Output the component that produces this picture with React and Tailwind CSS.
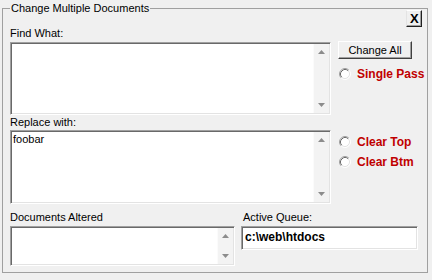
import React from "react";

// classic sunken edit box
function Sunken({ className = "", children }) {
  return (
    <div
      className={`border border-t-[#a0a0a0] border-l-[#a0a0a0] border-r-white border-b-white bg-white p-[1px] shadow-[inset_1px_1px_0_#696969,inset_-1px_-1px_0_#e3e3e3] ${className}`}
    >
      {children}
    </div>
  );
}

function ScrollBar() {
  return (
    <div className="w-[16px] h-full flex flex-col justify-between bg-[#f3f3f3] border-l border-[#fbfbfb]">
      <div className="h-[16px] flex items-center justify-center">
        <svg width="7" height="4" viewBox="0 0 7 4">
          <polygon points="3.5,0 7,4 0,4" fill="#8c8c8c" />
        </svg>
      </div>
      <div className="h-[16px] flex items-center justify-center">
        <svg width="7" height="4" viewBox="0 0 7 4">
          <polygon points="0,0 7,0 3.5,4" fill="#8c8c8c" />
        </svg>
      </div>
    </div>
  );
}

function TextBox({ className = "", text = "" }) {
  return (
    <Sunken className={className}>
      <div className="flex h-full">
        <textarea
          defaultValue={text}
          className="flex-1 h-full resize-none outline-none bg-transparent pl-[1px] pt-[1px] leading-[13px] overflow-hidden"
        />
        <ScrollBar />
      </div>
    </Sunken>
  );
}

function Radio({ label, className = "", cover = false }) {
  return (
    <div className={`flex items-center h-[14px] ${className}`}>
      <svg width="12" height="12" viewBox="0 0 12 12" className="ml-[1px] shrink-0">
        <circle cx="6" cy="6" r="5" fill="#fff" />
        <path d="M2.11 9.89 A5.5 5.5 0 0 1 9.89 2.11" stroke="#a0a0a0" fill="none" />
        <path d="M9.89 2.11 A5.5 5.5 0 0 1 2.11 9.89" stroke="#ffffff" fill="none" />
        <path d="M2.82 9.18 A4.5 4.5 0 0 1 9.18 2.82" stroke="#696969" fill="none" />
        <path d="M9.18 2.82 A4.5 4.5 0 0 1 2.82 9.18" stroke="#e3e3e3" fill="none" />
      </svg>
      <span
        className={`ml-[6px] whitespace-nowrap text-[12px] leading-[14px] font-bold text-[#c00000] ${
          cover ? "bg-[#f0f0f0] pr-[3px]" : ""
        }`}
      >
        {label}
      </span>
    </div>
  );
}

export default function App() {
  return (
    <div className="w-[432px] h-[280px] bg-[#f0f0f0] pt-[2px] pl-[2px] font-['Liberation_Sans',Arial,sans-serif] text-[11px] leading-[13px] text-black overflow-hidden">
      <fieldset className="w-[424px] h-[271px] border border-[#a0a0a0] pl-[7px]">
        <legend className="px-[1px] h-[13px] leading-[13px]">Change Multiple Documents</legend>

        {/* Top section */}
        <div className="flex">
          <div className="w-[321px] flex flex-col">
            <div className="mt-[12px]">Find What:</div>
            <TextBox className="mt-[2px] h-[73px]" />
            <div className="mt-[1px]">Replace with:</div>
            <TextBox className="mt-[1px] h-[74px]" text="foobar" />
          </div>

          <div className="ml-[7px] flex-1 flex flex-col">
            <button className="self-end mr-[5px] -mt-[5px] w-[16px] h-[17px] flex items-center justify-center border border-t-white border-l-[#e3e3e3] border-r-[#202020] border-b-[#202020] shadow-[inset_-1px_-1px_0_#a0a0a0] bg-[#f0f0f0] text-[13px] font-bold leading-none">
              X
            </button>
            <button className="mt-[14px] w-[74px] h-[18px] flex items-center justify-center border border-t-white border-l-white border-r-[#404040] border-b-[#404040] shadow-[inset_-1px_-1px_0_#a0a0a0] bg-[#f0f0f0] text-[11px] leading-none">
              Change All
            </button>
            <Radio label="Single Pass" className="mt-[8px]" cover />
            <Radio label="Clear Top" className="mt-[54px]" />
            <Radio label="Clear Btm" className="mt-[6px]" />
          </div>
        </div>

        {/* Bottom section */}
        <div className="flex mt-[7px]">
          <div className="w-[225px] flex flex-col">
            <div>Documents Altered</div>
            <TextBox className="mt-[2px] h-[40px]" />
          </div>
          <div className="ml-[6px] w-[177px] flex flex-col">
            <div className="pl-[2px]">Active Queue:</div>
            <Sunken className="mt-[2px] h-[24px]">
              <div className="pl-[2px] pt-[2px] text-[12px] leading-[14px] font-bold">c:\web\htdocs</div>
            </Sunken>
          </div>
        </div>
      </fieldset>
    </div>
  );
}
